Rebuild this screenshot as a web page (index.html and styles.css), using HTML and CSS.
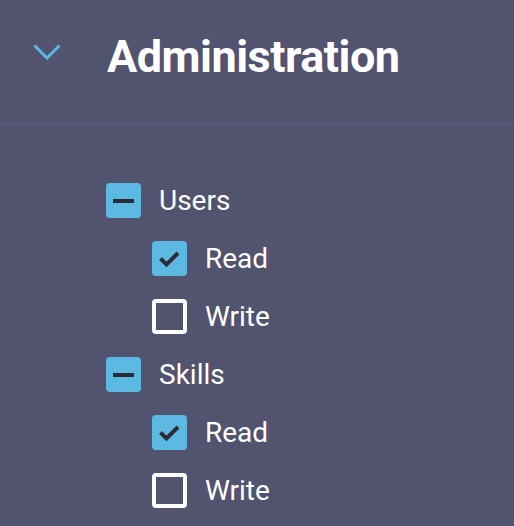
FILE: index.html
```html
<!DOCTYPE html>
<html lang="en">
<head>
  <meta charset="UTF-8">
  <meta name="viewport" content="width=device-width, initial-scale=1.0">
  <title>Permissions</title>
  <link rel="stylesheet" href="styles.css">
</head>
<body>

<div class="panel">
  <!-- Section header -->
  <div class="panel-header">
    <svg class="chevron" width="28" height="16" viewBox="0 0 28 16">
      <polyline points="1.5,1.5 14,14 26.5,1.5" fill="none" stroke="#5bb8e2" stroke-width="3"/>
    </svg>
    <h1 class="panel-title">Administration</h1>
  </div>

  <!-- Permission tree -->
  <ul class="tree">
    <li class="tree-node">
      <div class="item">
        <span class="box partial"></span>
        <span class="label">Users</span>
      </div>
      <ul class="children">
        <li class="item">
          <span class="box checked">
            <svg width="35" height="35" viewBox="0 0 35 35"><polyline points="8.5,17.5 14.5,23.5 26,12" fill="none" stroke="#2b2c36" stroke-width="4"/></svg>
          </span>
          <span class="label">Read</span>
        </li>
        <li class="item">
          <span class="box"></span>
          <span class="label">Write</span>
        </li>
      </ul>
    </li>
    <li class="tree-node">
      <div class="item">
        <span class="box partial"></span>
        <span class="label">Skills</span>
      </div>
      <ul class="children">
        <li class="item">
          <span class="box checked">
            <svg width="35" height="35" viewBox="0 0 35 35"><polyline points="8.5,17.5 14.5,23.5 26,12" fill="none" stroke="#2b2c36" stroke-width="4"/></svg>
          </span>
          <span class="label">Read</span>
        </li>
        <li class="item">
          <span class="box"></span>
          <span class="label">Write</span>
        </li>
      </ul>
    </li>
  </ul>
</div>

</body>
</html>
```

FILE: styles.css
```css
body {
  margin: 0;
  background-color: #52536e;
  color: #fff;
  font-family: Roboto, 'Noto Sans', sans-serif;
}

.panel {
  min-height: 100vh;
}

.panel-header {
  display: flex;
  align-items: flex-start;
  height: 124px;
  padding: 34px 0 0 33px;
  border-bottom: 1px solid #5d5e7e;
  box-sizing: border-box;
}

.chevron {
  display: block;
  margin-top: 10px;
}

.panel-title {
  margin: 0 0 0 46px;
  font-size: 45px;
  font-weight: bold;
  letter-spacing: -0.5px;
  line-height: 1;
}

.tree, .children {
  list-style: none;
  margin: 0;
  padding: 0;
  display: flex;
  flex-direction: column;
  gap: 23px;
}

.tree {
  padding: 59px 0 0 106px;
}

.tree-node {
  display: flex;
  flex-direction: column;
  gap: 23px;
}

.children {
  padding-left: 46px;
}

.item {
  display: flex;
  align-items: center;
  height: 35px;
}

.box {
  width: 35px;
  height: 35px;
  border-radius: 4px;
  border: 4px solid #fff;
  box-sizing: border-box;
  flex-shrink: 0;
  position: relative;
}

.box.checked, .box.partial {
  border: none;
  background-color: #5bb9e2;
}

.box svg {
  display: block;
}

.box.partial:after {
  content: "";
  position: absolute;
  left: 7px;
  top: 15.5px;
  width: 21px;
  height: 4px;
  background-color: #2b2c36;
}

.label {
  margin-left: 18px;
  font-size: 28px;
  line-height: 1;
}
```
